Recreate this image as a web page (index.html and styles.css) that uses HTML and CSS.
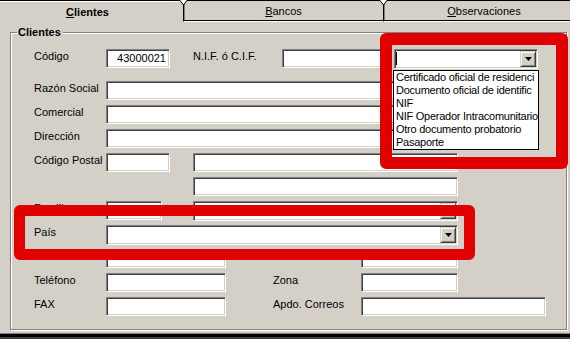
FILE: index.html
```html
<!DOCTYPE html>
<html lang="es">
<head>
  <meta charset="UTF-8" />
  <title>Clientes</title>
  <link rel="stylesheet" href="styles.css">
</head>
<body>
  <div class="tabs">
    <div class="tab tab-active"><u>C</u>lientes</div>
    <div class="tab tab-bancos"><u>B</u>ancos</div>
    <div class="tab tab-obs"><u>O</u>bservaciones</div>
    <svg class="notch notch-1" width="7" height="6" viewBox="0 0 7 6"><path d="M0 0H7L3.5 5Z" fill="#fff"/><path d="M0 0.5L3.5 5L7 0.5" stroke="#000" fill="none"/></svg>
    <svg class="notch notch-2" width="7" height="6" viewBox="0 0 7 6"><path d="M0 0H7L3.5 5Z" fill="#fff"/><path d="M0 0.5L3.5 5L7 0.5" stroke="#000" fill="none"/></svg>
  </div>

  <div class="panel">
    <fieldset class="group">
      <legend>Clientes</legend>

      <div class="row row-first">
        <span class="lbl">Código</span>
        <span class="field w-code value-right">43000021</span>
        <span class="lbl lbl-nif">N.I.F. ó C.I.F.</span>
        <span class="field w-nif"></span>
        <div class="field combo combo-nif">
          <span class="caret"></span>
          <span class="btn"><svg width="7" height="4" viewBox="0 0 7 4"><path d="M0 0H7L3.5 4Z" fill="#000"/></svg></span>
          <div class="list">
            <div>Certificado oficial de residenci</div>
            <div>Documento oficial de identific</div>
            <div>NIF</div>
            <div>NIF Operador Intracomunitario</div>
            <div>Otro documento probatorio</div>
            <div>Pasaporte</div>
          </div>
        </div>
      </div>

      <div class="row">
        <span class="lbl">Razón Social</span>
        <span class="field w-full"></span>
      </div>
      <div class="row">
        <span class="lbl">Comercial</span>
        <span class="field w-full"></span>
      </div>
      <div class="row">
        <span class="lbl">Dirección</span>
        <span class="field w-full"></span>
      </div>
      <div class="row">
        <span class="lbl">Código Postal</span>
        <span class="field w-code"></span>
        <span class="field w-long gap-cp"></span>
      </div>
      <div class="row">
        <span class="lbl"></span>
        <span class="field w-long gap-town"></span>
      </div>
      <div class="row">
        <span class="lbl">Familia</span>
        <span class="field w-fam"></span>
        <div class="field combo w-long gap-fam">
          <span></span>
          <span class="btn"><svg width="7" height="4" viewBox="0 0 7 4"><path d="M0 0H7L3.5 4Z" fill="#000"/></svg></span>
        </div>
      </div>
      <div class="row">
        <span class="lbl">País</span>
        <div class="field combo w-full">
          <span></span>
          <span class="btn"><svg width="7" height="4" viewBox="0 0 7 4"><path d="M0 0H7L3.5 4Z" fill="#000"/></svg></span>
        </div>
      </div>
      <div class="row">
        <span class="lbl"></span>
        <span class="field w-mid"></span>
        <span class="lbl lbl-right"></span>
        <span class="field w-zona"></span>
      </div>
      <div class="row">
        <span class="lbl">Teléfono</span>
        <span class="field w-mid"></span>
        <span class="lbl lbl-right">Zona</span>
        <span class="field w-zona"></span>
      </div>
      <div class="row">
        <span class="lbl">FAX</span>
        <span class="field w-mid"></span>
        <span class="lbl lbl-right">Apdo. Correos</span>
        <span class="field w-apdo"></span>
      </div>
    </fieldset>
  </div>
  <div class="panel-foot"></div>

  <!-- red highlight marks drawn over the dialog -->
  <div class="mark mark-nif"></div>
  <div class="mark mark-pais"></div>
</body>
</html>
```

FILE: styles.css
```css
* {
  box-sizing: border-box;
}

html, body {
  margin: 0;
  padding: 0;
}

body {
  position: relative;
  width: 570px;
  height: 339px;
  overflow: hidden;
  background: #d4d0c8;
  font-family: "Liberation Sans", Arial, sans-serif;
  font-size: 11px;
  color: #000;
}

/* tab strip */
.tabs {
  position: relative;
  display: flex;
  height: 22px;
  margin-left: -8px;
}

.tab {
  flex: none;
  height: 22px;
  border-top: 1px solid #000;
  padding-top: 4px;
  line-height: 13px;
  text-align: center;
  white-space: nowrap;
}

.tab-active {
  width: 191px;
  padding-top: 5px;
  font-weight: bold;
  box-shadow: inset 0 1px 0 #fff;
}

.tab-bancos {
  width: 200px;
}

.tab-obs {
  width: 201px;
}

.tab + .tab {
  border-left: 1px solid #000;
  border-bottom: 1px solid #fff;
  box-shadow: inset 0 -1px 0 #000, inset 1px 0 0 #808080;
}

.notch {
  position: absolute;
  top: 0;
}

.notch-1 {
  left: 188px;
}

.notch-2 {
  left: 388px;
}

/* tab page */
.panel {
  height: 311px;
  padding-top: 4px;
}

.panel-foot {
  height: 6px;
  border-top: 1px solid #808080;
  background: linear-gradient(#000 0, #000 3px, #404040 3px);
}

.group {
  width: 557px;
  height: 304px;
  min-width: 0;
  margin: 0 0 0 10px;
  padding: 10px 0 0 0;
  border: 1px solid #808080;
  box-shadow: 1px 1px 0 #fff, inset 1px 1px 0 #fff;
}

.group legend {
  margin-left: 6px;
  padding: 0 2px 0 1px;
  line-height: 13px;
  font-weight: bold;
  background: #d4d0c8;
}

.row {
  display: flex;
  align-items: flex-start;
  height: 24px;
  padding-left: 23px;
}

.row-first {
  height: 32px;
}

.lbl {
  flex: none;
  width: 72px;
  padding-top: 1px;
  line-height: 13px;
  white-space: nowrap;
}

.lbl-nif {
  width: 89px;
  margin-left: 23px;
}

.lbl-right {
  width: 88px;
  margin-left: 47px;
}

/* sunken edit box */
.field {
  flex: none;
  height: 19px;
  padding: 2px 3px;
  line-height: 13px;
  background: #fff;
  border: 1px solid;
  border-color: #808080 #fff #fff #808080;
  box-shadow: inset 1px 1px 0 #404040, inset -1px -1px 0 #d4d0c8;
  white-space: nowrap;
}

.value-right {
  text-align: right;
}

.w-code { width: 64px; }
.w-nif { width: 107px; }
.w-full { width: 352px; }
.w-long { width: 265px; }
.w-fam { width: 56px; }
.w-mid { width: 120px; }
.w-zona { width: 97px; }
.w-apdo { width: 185px; }

.gap-cp { margin-left: 23px; }
.gap-town { margin-left: 87px; }
.gap-fam { margin-left: 31px; }

/* combo box */
.combo {
  display: flex;
  justify-content: space-between;
  height: 20px;
  padding: 1px;
}

.combo-nif {
  position: relative;
  width: 144px;
  margin-left: 5px;
}

.caret {
  width: 1px;
  height: 13px;
  margin-top: 1px;
  background: #000;
}

.btn {
  display: flex;
  align-items: center;
  justify-content: center;
  width: 16px;
  height: 16px;
  background: #d4d0c8;
  border: 1px solid;
  border-color: #d4d0c8 #404040 #404040 #d4d0c8;
  box-shadow: inset 1px 1px 0 #fff, inset -1px -1px 0 #808080;
}

.list {
  position: absolute;
  left: -2px;
  top: 20px;
  z-index: 1;
  width: 146px;
  height: 80px;
  overflow: hidden;
  background: #fff;
  border: 1px solid #000;
}

.list div {
  padding-left: 2px;
  line-height: 13px;
  letter-spacing: -0.25px;
  white-space: nowrap;
}

/* red highlight rectangles */
.mark {
  position: absolute;
  z-index: 2;
  border: 12px solid #e00000;
  border-radius: 6px;
}

.mark-nif {
  left: 380px;
  top: 33px;
  width: 188px;
  height: 136px;
}

.mark-pais {
  left: 14px;
  top: 205px;
  width: 461px;
  height: 55px;
  border-width: 11px;
}
```
